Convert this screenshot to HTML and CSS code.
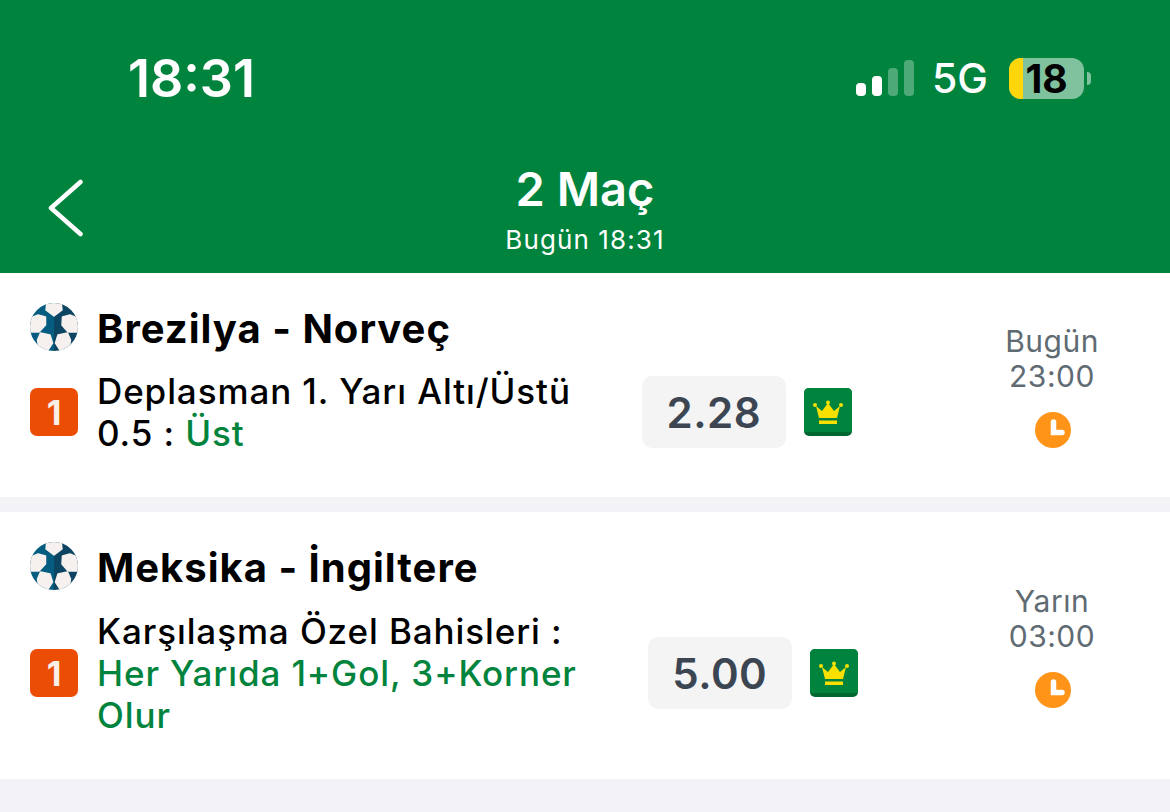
FILE: index.html
```html
<!DOCTYPE html>
<html lang="en">
<head>
    <meta charset="UTF-8">
    <meta name="viewport" content="width=device-width, initial-scale=1.0">
    <title>2 Maç</title>
    <link rel="stylesheet" href="styles.css">
</head>
<body>
    <header class="header">
        <div class="status-bar">
            <span class="clock-time">18:31</span>
            <div class="status-icons">
                <div class="signal">
                    <span class="bar bar-1"></span>
                    <span class="bar bar-2"></span>
                    <span class="bar bar-3 off"></span>
                    <span class="bar bar-4 off"></span>
                </div>
                <span class="network">5G</span>
                <div class="battery">
                    <span class="battery-fill"></span>
                    <span class="battery-level">18</span>
                </div>
                <span class="battery-nub"></span>
            </div>
        </div>
        <nav class="nav">
            <a href="#" class="back" aria-label="Geri">
                <svg width="36" height="58" viewBox="0 0 36 58" fill="none" stroke="#fff" stroke-width="4.500" stroke-linecap="round" stroke-linejoin="round">
                    <path d="M32.500 3 3 29l29.500 26"/>
                </svg>
            </a>
            <div class="nav-title">
                <h1>2 Maç</h1>
                <p>Bugün 18:31</p>
            </div>
        </nav>
    </header>

    <main>
        <section class="card card-first">
            <div class="card-main">
                <div class="match">
                    <svg class="ball" viewBox="0 0 48 48"><use href="#ball-icon"/></svg>
                    <h2>Brezilya - Norveç</h2>
                </div>
                <div class="bet">
                    <span class="mbs">1</span>
                    <p class="bet-text">Deplasman 1. Yarı Altı/Üstü<br>0.5 : <em>Üst</em></p>
                    <span class="odds">2.28</span>
                    <svg class="crown" viewBox="0 0 48 48"><use href="#crown-icon"/></svg>
                </div>
            </div>
            <div class="time">
                <span>Bugün</span>
                <span>23:00</span>
                <svg class="time-icon" viewBox="0 0 36 36"><use href="#clock-icon"/></svg>
            </div>
        </section>

        <section class="card card-second">
            <div class="card-main">
                <div class="match">
                    <svg class="ball" viewBox="0 0 48 48"><use href="#ball-icon"/></svg>
                    <h2>Meksika - İngiltere</h2>
                </div>
                <div class="bet">
                    <span class="mbs">1</span>
                    <p class="bet-text">Karşılaşma Özel Bahisleri :<br><em>Her Yarıda 1+Gol, 3+Korner<br>Olur</em></p>
                    <span class="odds">5.00</span>
                    <svg class="crown" viewBox="0 0 48 48"><use href="#crown-icon"/></svg>
                </div>
            </div>
            <div class="time">
                <span>Yarın</span>
                <span>03:00</span>
                <svg class="time-icon" viewBox="0 0 36 36"><use href="#clock-icon"/></svg>
            </div>
        </section>
    </main>

    <svg class="icon-defs" aria-hidden="true">
        <symbol id="ball-icon" viewBox="0 0 48 48">
            <rect width="24" height="48" fill="#045d80"/>
            <rect x="24" width="24" height="48" fill="#0c4462"/>
            <g fill="#f6f1ef" stroke="#f6f1ef" stroke-width="1.500" stroke-linejoin="round">
                <polygon points="17,-2 31,-2 32,7 24,13 16,7"/>
                <polygon points="8,12 15.500,14 15.500,22 9,29 -2,29 -2,16"/>
                <polygon points="40,12 32.500,14 32,22 38,29 50,29 50,16"/>
                <polygon points="10.500,30 20,32 22.500,40 18,47 9,47 7.500,37"/>
                <polygon points="37.500,30 28,32 25.500,40 30,47 39,47 40.500,37"/>
            </g>
        </symbol>
        <symbol id="crown-icon" viewBox="0 0 48 48">
            <rect width="48" height="48" rx="5" fill="#00662f"/>
            <path d="M5 0h38a5 5 0 0 1 5 5v39H0V5a5 5 0 0 1 5-5z" fill="#00843d"/>
            <g fill="#f9e000">
                <circle cx="11" cy="17" r="2"/>
                <circle cx="24" cy="14.500" r="2"/>
                <circle cx="37" cy="17" r="2"/>
                <path d="M12 18l6 5 6-8 6 8 6-5-3 12H15z"/>
                <rect x="15" y="32.500" width="18" height="3.500"/>
            </g>
        </symbol>
        <symbol id="clock-icon" viewBox="0 0 36 36">
            <circle cx="18" cy="18" r="18" fill="#ff9419"/>
            <path d="M18.500 10v10.500h8.500" fill="none" stroke="#fff" stroke-width="5.500" stroke-linecap="round" stroke-linejoin="miter"/>
        </symbol>
    </svg>
</body>
</html>
```

FILE: styles.css
```css
* {
    margin: 0;
    padding: 0;
    box-sizing: border-box;
}

body {
    background: #f3f3f7;
    font-family: 'Inter', 'Liberation Sans', sans-serif;
    min-height: 100vh;
    overflow: hidden;
}

.header {
    background: #00843d;
    color: white;
    height: 273px;
    padding-top: 46px;
}

.status-bar {
    display: flex;
    align-items: center;
    justify-content: space-between;
    height: 64px;
    padding: 0 79px 0 128px;
}

.clock-time {
    font-size: 52px;
    font-weight: 600;
}

.status-icons {
    display: flex;
    align-items: center;
}

.signal {
    display: flex;
    align-items: flex-end;
    gap: 6px;
    height: 36px;
    margin-right: 18px;
}

.bar {
    width: 10px;
    background: white;
    border-radius: 4px;
}

.bar.off {
    opacity: 0.3;
}

.bar-1 { height: 13px; }
.bar-2 { height: 20px; }
.bar-3 { height: 28px; }
.bar-4 { height: 36px; }

.network {
    font-size: 41px;
    font-weight: 500;
    line-height: 1;
    margin-right: 21px;
}

.battery {
    position: relative;
    width: 75px;
    height: 41px;
    border-radius: 12px;
    background: rgba(255,255,255,0.5);
    display: flex;
    align-items: center;
    justify-content: center;
}

.battery-fill {
    position: absolute;
    left: 0;
    top: 0;
    bottom: 0;
    width: 14px;
    border-radius: 12px 0 0 12px;
    background: #ffd60a;
}

.battery-level {
    position: relative;
    color: black;
    font-size: 39px;
    font-weight: 700;
    line-height: 1;
}

.battery-nub {
    width: 4px;
    height: 13px;
    margin-left: 3px;
    border-radius: 0 4px 4px 0;
    background: rgba(255,255,255,0.5);
}

.nav {
    display: grid;
    grid-template-columns: 1fr auto 1fr;
    align-items: start;
    padding: 0 48px;
    margin-top: 52px;
}

.back {
    display: block;
    width: 36px;
    height: 58px;
    margin-top: 17px;
}

.nav-title {
    text-align: center;
}

.nav-title h1 {
    font-size: 47px;
    font-weight: 600;
    line-height: 54px;
}

.nav-title p {
    font-size: 26px;
    letter-spacing: 1.1px;
    line-height: 30px;
    margin-top: 9px;
}

.card {
    display: flex;
    align-items: center;
    background: white;
    padding: 30px 58px 0 30px;
}

.card-first {
    height: 224px;
    margin-bottom: 15px;
}

.card-second {
    height: 267px;
}

.card-main {
    flex: 1;
    align-self: flex-start;
}

.match {
    display: flex;
    align-items: center;
    gap: 19px;
    height: 48px;
}

.ball {
    width: 48px;
    height: 48px;
    border-radius: 50%;
}

.match h2 {
    font-size: 40px;
    font-weight: 700;
    letter-spacing: 1px;
    color: black;
    margin-top: 2px;
}

.bet {
    display: flex;
    align-items: center;
    margin-top: 20px;
}

.card-first .bet {
    margin-top: 19px;
}

.mbs {
    display: flex;
    align-items: center;
    justify-content: center;
    width: 48px;
    height: 48px;
    border-radius: 7px;
    background: #ec4d04;
    color: #f8efe8;
    font-size: 34px;
    font-weight: 700;
    margin-right: 19px;
}

.bet-text {
    font-size: 35px;
    font-weight: 500;
    letter-spacing: 0.9px;
    line-height: 42px;
    color: black;
    white-space: nowrap;
}

.bet-text em {
    font-style: normal;
    color: #00843d;
}

.odds {
    display: flex;
    align-items: center;
    justify-content: center;
    width: 144px;
    height: 72px;
    margin-left: 71px;
    border-radius: 10px;
    background: #f4f4f4;
    color: #3c4552;
    font-size: 42px;
    font-weight: 600;
    letter-spacing: 0.5px;
}

.crown {
    width: 48px;
    height: 48px;
    margin-left: 18px;
}

.time {
    display: flex;
    flex-direction: column;
    align-items: center;
    width: 120px;
    margin-top: -30px;
    padding-top: 1px;
    font-size: 30px;
    letter-spacing: 0.5px;
    line-height: 35px;
    color: #5f6b73;
}

.time-icon {
    width: 36px;
    height: 36px;
    margin: 18px 0 0 2px;
}

.icon-defs {
    display: none;
}
```
